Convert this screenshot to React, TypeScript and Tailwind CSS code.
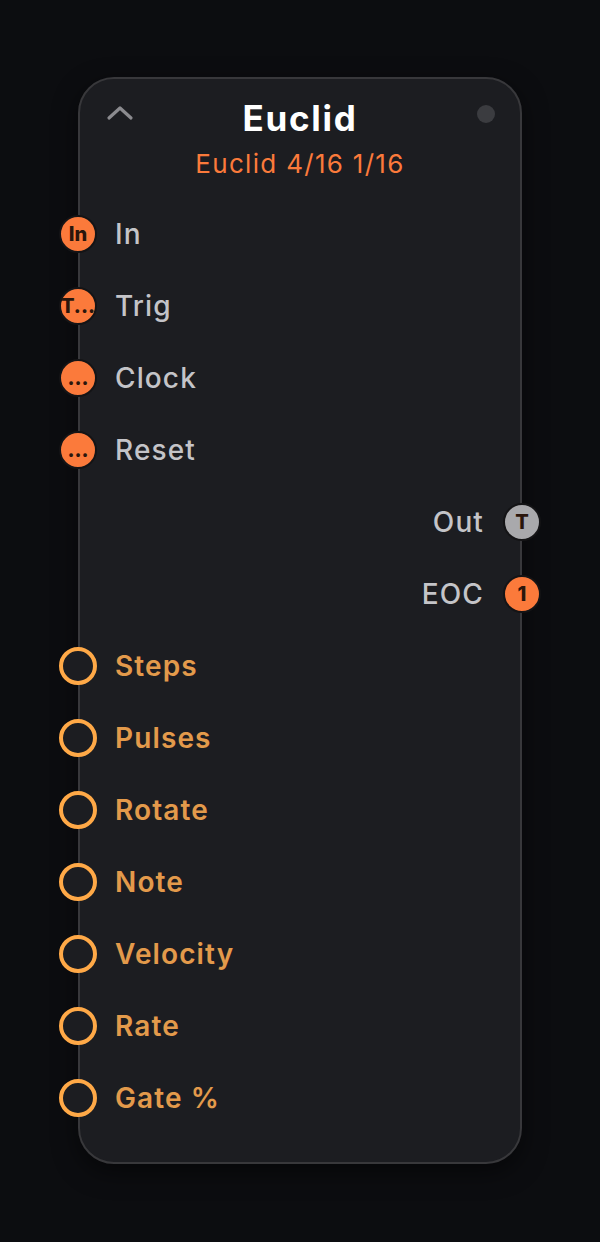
type Port = { label: string; kind: "in" | "out" | "param"; badge?: string; tone?: "orange" | "gray" };

const ports: Port[] = [
  { label: "In", kind: "in", badge: "In" },
  { label: "Trig", kind: "in", badge: "T..." },
  { label: "Clock", kind: "in", badge: "..." },
  { label: "Reset", kind: "in", badge: "..." },
  { label: "Out", kind: "out", badge: "T", tone: "gray" },
  { label: "EOC", kind: "out", badge: "1" },
  { label: "Steps", kind: "param" },
  { label: "Pulses", kind: "param" },
  { label: "Rotate", kind: "param" },
  { label: "Note", kind: "param" },
  { label: "Velocity", kind: "param" },
  { label: "Rate", kind: "param" },
  { label: "Gate %", kind: "param" },
];

function Jack({ port }: { port: Port }) {
  if (port.kind === "param") {
    return (
      <div className="w-[38px] h-[38px] shrink-0 rounded-full border-[4px] border-[#ffa947] bg-[#1c1d21] -ml-[21px]" />
    );
  }
  const fill = port.tone === "gray" ? "bg-[#a9a9ac]" : "bg-[#fb7a3b]";
  const side = port.kind === "out" ? "-mr-[21px]" : "-ml-[21px]";
  return (
    <div
      className={`w-[38px] h-[38px] shrink-0 rounded-full border-2 border-[#141416] ${fill} ${side} flex items-center justify-center overflow-visible`}
    >
      <span className="text-[20px] font-extrabold leading-none text-[#2a160c] whitespace-nowrap">
        {port.badge}
      </span>
    </div>
  );
}

export default function App() {
  return (
    <div className="min-h-[1242px] w-full bg-[#0c0d10] pt-[77px] font-['Inter',sans-serif]">
      <div className="relative mx-auto w-[444px] h-[1087px] rounded-[36px] border-2 border-[#38383b] bg-[#1c1d21] shadow-[0_8px_24px_rgba(0,0,0,0.5)]">
        {/* collapse chevron + status dot */}
        <svg
          className="absolute left-[26px] top-[25px]"
          width="28"
          height="20"
          viewBox="0 0 28 20"
          fill="none"
          stroke="#8b8b8f"
          strokeWidth="3.2"
          strokeLinecap="round"
          strokeLinejoin="round"
        >
          <path d="M3 14 L14 4 L25 14" />
        </svg>
        <div className="absolute right-[25px] top-[26px] w-[18px] h-[18px] rounded-full bg-[#3b3c40]" />

        <div className="pt-[19px] pb-[18px] text-center">
          <div className="text-[35px] leading-[40px] font-bold tracking-[0.05em] text-white">Euclid</div>
          <div className="mt-[10px] text-[26px] leading-[32px] tracking-[0.05em] text-[#fb7a3b]">Euclid 4/16 1/16</div>
        </div>

        <div className="flex flex-col">
          {ports.map((p) => (
            <div
              key={p.label}
              className={`flex h-[72px] items-center ${p.kind === "out" ? "justify-end gap-[19px]" : "gap-[18px]"}`}
            >
              {p.kind === "out" ? (
                <>
                  <span className="text-[28px] font-medium tracking-[0.04em] text-[#c4c4c8]">{p.label}</span>
                  <Jack port={p} />
                </>
              ) : (
                <>
                  <Jack port={p} />
                  <span
                    className={`text-[28px] tracking-[0.04em] ${p.kind === "param" ? "font-semibold text-[#e39a4b]" : "font-medium text-[#c4c4c8]"}`}
                  >
                    {p.label}
                  </span>
                </>
              )}
            </div>
          ))}
        </div>
      </div>
    </div>
  );
}
